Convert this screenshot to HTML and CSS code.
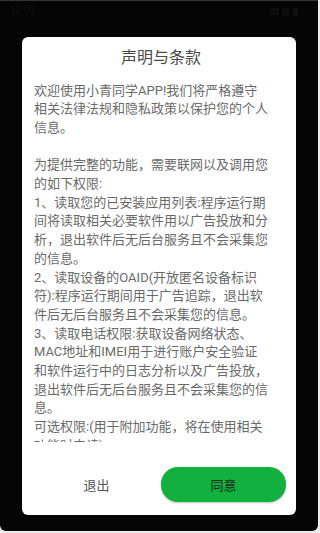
FILE: index.html
```html
<!DOCTYPE html>
<html lang="zh-CN">
<head>
<meta charset="utf-8">
<title>声明与条款</title>
<link rel="stylesheet" href="styles.css">
</head>
<body>
<div class="phone">
  <div class="statusbar">
    <span class="sb-left">12:00</span>
    <span class="sb-right">
      <span class="sb-icon"></span><span class="sb-icon"></span><span class="sb-batt"></span>
    </span>
  </div>
  <div class="card">
    <div class="title">声明与条款</div>
    <div class="scroll">
      <p class="text">欢迎使用小青同学APP!我们将严格遵守<br>相关法律法规和隐私政策以保护您的个人<br>信息。<br><br>为提供完整的功能，需要联网以及调用您<br>的如下权限:<br>1、读取您的已安装应用列表:程序运行期<br>间将读取相关必要软件用以广告投放和分<br>析，退出软件后无后台服务且不会采集您<br>的信息。<br>2、读取设备的OAID(开放匿名设备标识<br>符):程序运行期间用于广告追踪，退出软<br>件后无后台服务且不会采集您的信息。<br>3、读取电话权限:获取设备网络状态、<br>MAC地址和IMEI用于进行账户安全验证<br>和软件运行中的日志分析以及广告投放，<br>退出软件后无后台服务且不会采集您的信<br>息。<br>可选权限:(用于附加功能，将在使用相关<br>功能时申请)</p>
    </div>
    <div class="actions">
      <button class="btn btn-exit" type="button">退出</button>
      <button class="btn btn-agree" type="button">同意</button>
    </div>
  </div>
</div>
</body>
</html>
```

FILE: styles.css
```css
* { box-sizing: border-box; }

body {
  margin: 0;
  background: #ececec;
  font-family: "Roboto", "Noto Sans CJK SC", sans-serif;
}

.phone {
  height: 531px;
  background: #050505;
  border-top: 1px solid #343434;
  border-radius: 0 0 6px 6px;
  margin-right: 2px;
}

.statusbar {
  height: 36px;
  display: flex;
  justify-content: space-between;
  align-items: flex-start;
  padding: 4px 20px 0 10px;
  color: #0f0f0f;
  font-size: 10px;
}

.sb-right { display: flex; gap: 3px; padding-top: 3px; }
.sb-icon { width: 8px; height: 7px; background: #0d0d0d; }
.sb-batt { width: 5px; height: 8px; background: #0f0f0f; }

.card {
  margin: 0 22px;
  height: 478px;
  background: #ffffff;
  border-radius: 6px;
  padding: 10px 10px 13.3px 12px;
  display: flex;
  flex-direction: column;
}

.title {
  font-size: 16px;
  line-height: 22px;
  text-align: center;
  color: #4a4a4a;
  padding-left: 2px;
}

.scroll {
  margin-top: 12.5px;
  height: 360.5px;
  overflow: hidden;
}

.text {
  margin: 0;
  font-size: 13px;
  line-height: 18.7px;
  color: #6a6a6a;
  white-space: nowrap;
}

.actions {
  margin-top: 25.3px;
  display: grid;
  grid-template-columns: 1fr 1fr;
  gap: 2px;
}

.btn {
  height: 34.4px;
  border: none;
  font-family: "Roboto", "Noto Sans CJK SC", sans-serif;
  font-size: 13px;
  padding: 0;
  border-radius: 17px;
}

.btn-exit {
  background: transparent;
  color: #555555;
}

.btn-agree {
  background: #12b03e;
  color: #1c2a1c;
  box-shadow: 0 1px 2px rgba(0, 0, 0, 0.25);
}
```
